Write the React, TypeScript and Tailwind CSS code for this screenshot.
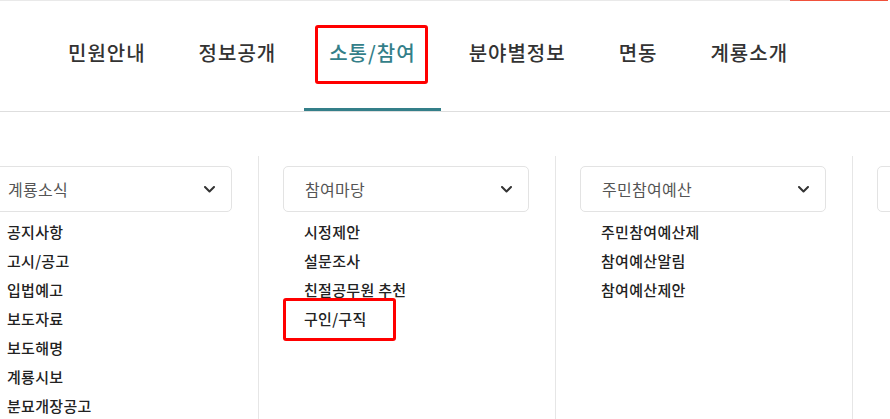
import { ReactNode } from 'react'

const navItems = ['민원안내', '정보공개', '소통/참여', '분야별정보', '면동', '계룡소개']

interface Column {
  title: string
  links: string[]
}

const columns: Column[] = [
  {
    title: '계룡소식',
    links: ['공지사항', '고시/공고', '입법예고', '보도자료', '보도해명', '계룡시보', '분묘개장공고'],
  },
  {
    title: '참여마당',
    links: ['시정제안', '설문조사', '친절공무원 추천', '구인/구직'],
  },
  {
    title: '주민참여예산',
    links: ['주민참여예산제', '참여예산알림', '참여예산제안'],
  },
  { title: '', links: [] },
]

function Chevron() {
  return (
    <svg width="11" height="7" viewBox="0 0 11 7" fill="none" className="shrink-0">
      <path d="M1 1l4.5 4.5L10 1" stroke="#333" strokeWidth="2" strokeLinecap="round" strokeLinejoin="round" />
    </svg>
  )
}

function Highlight({ className }: { className: string }) {
  // red annotation box drawn over the screenshot
  return <div className={`pointer-events-none absolute rounded-[3px] border-[3px] border-[#ff0000] ${className}`} />
}

function NavItem({ label, active }: { label: string; active?: boolean }): ReactNode {
  return (
    <div className="relative flex h-full items-center px-[25px] pb-[6px]">
      <span
        className={`text-[20px] font-medium tracking-[1px] ${active ? 'text-[#347f89]' : 'text-[#333]'}`}
      >
        {label}
      </span>
      {active && (
        <>
          <div className="absolute bottom-0 left-0 right-0 h-[3px] bg-[#347f89]" />
          <Highlight className="left-[11px] right-[13px] top-[24px] h-[59px]" />
        </>
      )}
    </div>
  )
}

export default function App() {
  return (
    <div
      className="h-[419px] w-[890px] overflow-hidden bg-white"
      style={{ fontFamily: '"Noto Sans CJK KR", "Noto Sans", sans-serif' }}
    >
      {/* top strip */}
      <div className="flex h-px">
        <div className="w-[790px] bg-[#e9e9e9]" />
        <div className="w-[98px] bg-[#f0513b]" />
      </div>

      {/* main nav */}
      <nav className="flex h-[111px] gap-[3px] border-b border-[#dedede] pl-[43px]">
        {navItems.map((item) => (
          <NavItem key={item} label={item} active={item === '소통/참여'} />
        ))}
      </nav>

      {/* sub menu columns */}
      <div className="-ml-[39px] mt-[44px] flex h-[263px]">
        {columns.map((col, i) => (
          <div key={i} className="w-[297px] shrink-0 border-l border-[#e6e6e6] pl-[24px] pr-[26px] pt-[10px]">
            <div className="flex h-[46px] items-center justify-between rounded-[5px] border border-[#e3e3e3] pl-[21px] pr-[16px]">
              <span className="text-[16px] tracking-[0.3px] text-[#555]">{col.title}</span>
              {col.title && <Chevron />}
            </div>
            <ul className="mt-[5px] pl-[21px]">
              {col.links.map((link) => (
                <li
                  key={link}
                  className="relative text-[15px] font-medium leading-[29px] tracking-[0.3px] text-[#222]"
                >
                  {link}
                  {link === '구인/구직' && <Highlight className="-left-[21px] -top-[6px] h-[43px] w-[113px]" />}
                </li>
              ))}
            </ul>
          </div>
        ))}
      </div>
    </div>
  )
}
